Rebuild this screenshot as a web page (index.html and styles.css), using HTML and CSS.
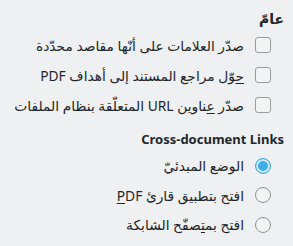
FILE: index.html
```html
<!DOCTYPE html>
<html lang="ar" dir="rtl">
<head>
  <meta charset="UTF-8">
  <meta name="viewport" content="width=device-width, initial-scale=1.0">
  <title>PDF</title>

  <!-- Breeze-like settings page -->
  <link rel="stylesheet" href="styles.css">
</head>
<body>

  <div class="page">
    <!-- General options -->
    <h3 class="group-title arabic">عامّ</h3>
    <ul class="options">
      <li class="option"><span class="check"></span><span class="label">صدّر العلامات على أنّها مقاصد محدّدة</span></li>
      <li class="option"><span class="check"></span><span class="label"><u>ح</u>وّل مراجع المستند إلى أهداف PDF</span></li>
      <li class="option"><span class="check"></span><span class="label">صدّر <u>ع</u>ناوين URL المتعلّقة بنظام الملفات</span></li>
    </ul>

    <!-- Cross-document links -->
    <h3 class="group-title second">Cross-document Links</h3>
    <ul class="options radios">
      <li class="option"><span class="radio checked"></span><span class="label">الوضع المبدئيّ</span></li>
      <li class="option"><span class="radio"></span><span class="label">افتح بتطبيق قارئ <u>P</u>DF</span></li>
      <li class="option"><span class="radio"></span><span class="label">افتح بم<u>ت</u>صفّح الشابكة</span></li>
    </ul>
  </div>

</body>
</html>
```

FILE: styles.css
```css
/* General Body Styling */
body {
  font-family: 'Noto Sans', 'DejaVu Sans', sans-serif;
  font-size: 13px;
  margin: 0;
  padding: 0;
  background-color: #eff0f1;
  color: #232629;
}

/* Page */
.page {
  padding: 9px 9px 0 0;
}

/* Group headings */
.group-title {
  font-size: 13px;
  font-weight: bold;
  line-height: 20px;
  margin: 0 0 1px 0;
}

.group-title.arabic {
  font-size: 14px;
}

.group-title.second {
  margin-top: 9px;
  margin-bottom: 2px;
}

/* Option list */
.options {
  list-style-type: none;
  margin: 0;
  padding: 0 13px 0 0;
}

.option {
  display: flex;
  align-items: center;
  height: 30px;
}

.radios .option {
  height: 29.5px;
}

.label {
  font-size: 13.8px;
  margin-right: 11px;
  white-space: nowrap;
}

.label u {
  text-underline-offset: 2px;
}

/* Checkbox */
.check {
  width: 14px;
  height: 14px;
  border: 1px solid #9a9c9e;
  border-radius: 3px;
  background-color: #f3f4f4;
  flex-shrink: 0;
}

/* Radio buttons */
.radio {
  width: 14px;
  height: 14px;
  border: 1px solid #8f9193;
  border-radius: 50%;
  background-color: #f3f4f4;
  flex-shrink: 0;
  box-sizing: content-box;
}

.radio.checked {
  border-color: #3daee9;
  background-color: #3daee9;
  box-shadow: inset 0 0 0 2px #d6ecf8;
}
```
